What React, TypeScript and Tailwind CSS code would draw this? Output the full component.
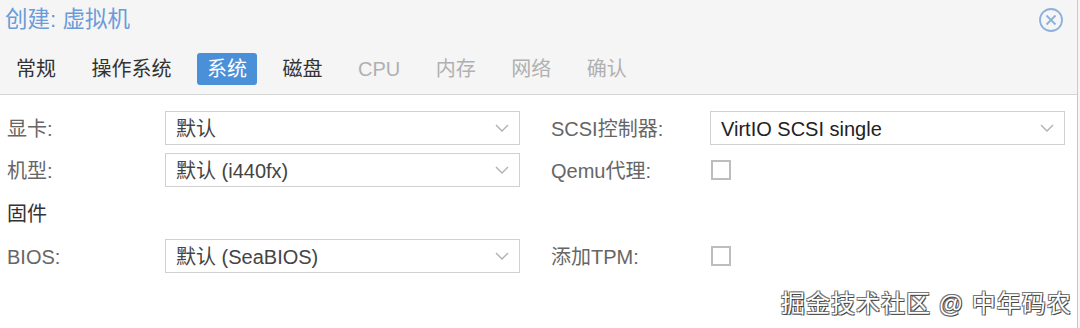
import React from "react";

const cjk = '"Liberation Sans", "Noto Sans CJK SC", sans-serif';

function Chevron() {
  return (
    <svg width="14" height="8" viewBox="0 0 14 8" className="shrink-0">
      <path d="M1 1 L7 7 L13 1" fill="none" stroke="#b0b0b0" strokeWidth="1.4" />
    </svg>
  );
}

function Select({ value, dark }: { value: string; dark?: boolean }) {
  return (
    <div className="flex h-[34px] w-[355px] items-center justify-between border border-[#d0d0d0] bg-white pl-[10px] pr-[10px]">
      <span className={"pt-[2px] " + (dark ? "text-[#222]" : "text-[#444]")}>{value}</span>
      <Chevron />
    </div>
  );
}

function Checkbox() {
  return <div className="ml-[1px] h-[20px] w-[20px] border-2 border-[#bdbdbd] bg-white" />;
}

function Label({ children, w }: { children: React.ReactNode; w: string }) {
  return <div className={`${w} shrink-0 pt-[2px] text-[#666]`}>{children}</div>;
}

const tabs: { t: string; state: "n" | "a" | "d" }[] = [
  { t: "常规", state: "n" },
  { t: "操作系统", state: "n" },
  { t: "系统", state: "a" },
  { t: "磁盘", state: "n" },
  { t: "CPU", state: "d" },
  { t: "内存", state: "d" },
  { t: "网络", state: "d" },
  { t: "确认", state: "d" },
];

export default function App() {
  return (
    <div className="relative h-[328px] w-[1080px] overflow-hidden bg-[#f5f5f5]" style={{ fontFamily: cjk }}>
      <div className="h-[328px] w-[1078px] border-r border-[#c9c9c9] bg-white">
        {/* header */}
        <div className="h-[95px] border-b border-[#d6d6d6] bg-[#f5f5f5]">
          <div className="flex h-[40px] items-center justify-between pl-[5px] pr-[13px]">
            <span className="text-[22.5px] text-[#6b9bd8]">创建: 虚拟机</span>
            <svg width="26" height="26" viewBox="0 0 26 26">
              <circle cx="13" cy="13" r="11" fill="none" stroke="#8db0dd" strokeWidth="1.8" />
              <path d="M8.5 8.5 L17.5 17.5 M17.5 8.5 L8.5 17.5" stroke="#8db0dd" strokeWidth="1.8" />
            </svg>
          </div>
          <div className="mt-[13px] flex gap-[15.5px] pl-[6px]">
            {tabs.map((tab) => (
              <div
                key={tab.t}
                className={
                  "flex h-[32px] items-center rounded-[3px] px-[10px] text-[20px] " +
                  (tab.state === "a"
                    ? "bg-[#4a90d9] text-white"
                    : tab.state === "d"
                    ? "text-[#b0b0b0]"
                    : "text-[#333]")
                }
              >
                {tab.t}
              </div>
            ))}
          </div>
        </div>
        {/* body */}
        <div className="flex flex-col gap-[8px] pt-[16px] text-[20px]">
          <div className="flex items-center">
            <div className="flex w-[551px] items-center pl-[7px]">
              <Label w="w-[158px]">显卡:</Label>
              <Select value="默认" />
            </div>
            <div className="flex items-center">
              <Label w="w-[159px]">SCSI控制器:</Label>
              <Select value="VirtIO SCSI single" dark />
            </div>
          </div>
          <div className="flex items-center">
            <div className="flex w-[551px] items-center pl-[7px]">
              <Label w="w-[158px]">机型:</Label>
              <Select value="默认 (i440fx)" />
            </div>
            <div className="flex items-center">
              <Label w="w-[159px]">Qemu代理:</Label>
              <Checkbox />
            </div>
          </div>
          <div className="flex h-[36px] items-center pl-[7px] pt-[2px] text-[#333]">固件</div>
          <div className="flex items-center">
            <div className="flex w-[551px] items-center pl-[7px]">
              <Label w="w-[158px]">BIOS:</Label>
              <Select value="默认 (SeaBIOS)" />
            </div>
            <div className="flex items-center">
              <Label w="w-[159px]">添加TPM:</Label>
              <Checkbox />
            </div>
          </div>
        </div>
      </div>
      {/* watermark */}
      <div
        className="absolute left-[781px] top-[286px] text-[24px] tracking-[1px] text-white"
        style={{ textShadow: "1px 1px 0 #444, -1px -1px 0 #777, 1px -1px 0 #777, -1px 1px 0 #777" }}
      >
        掘金技术社区 @ 中年码农
      </div>
    </div>
  );
}
